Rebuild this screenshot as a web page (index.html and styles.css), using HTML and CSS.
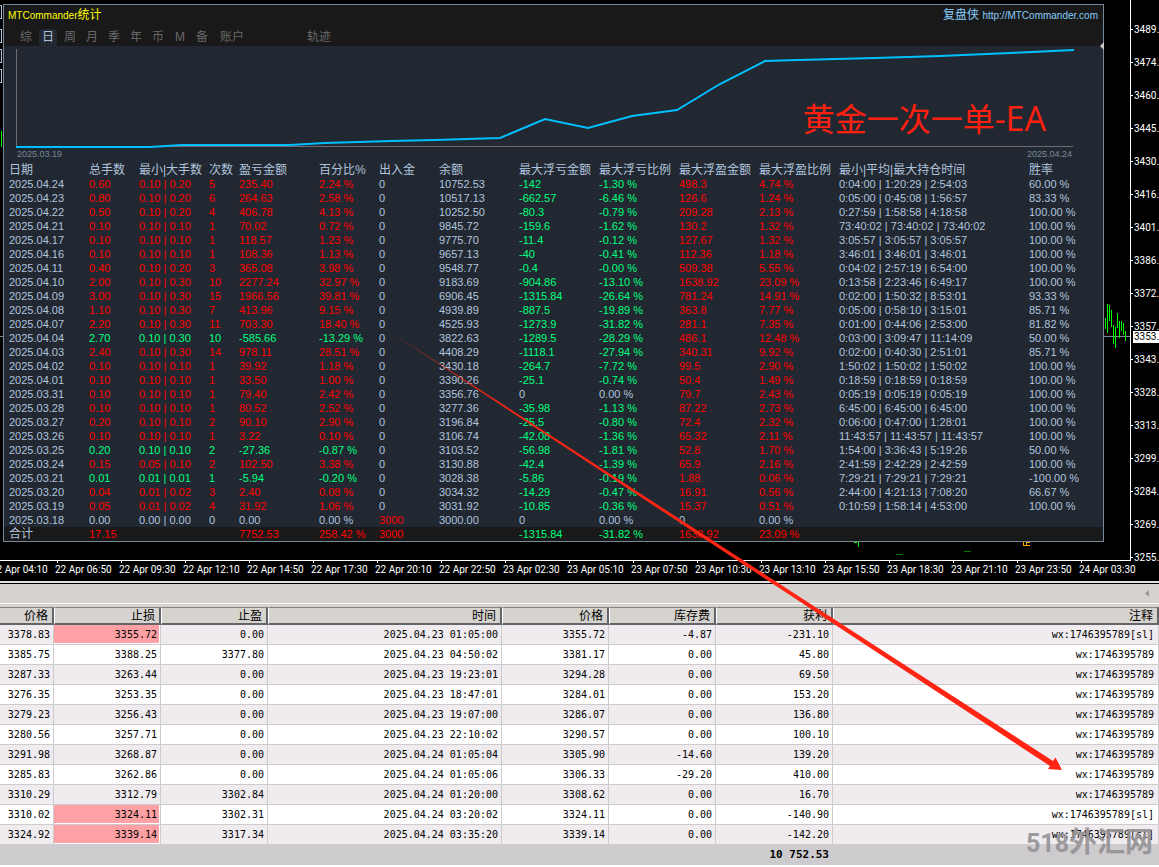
FILE: index.html
```html
<!DOCTYPE html>
<html lang="zh-CN">
<head>
    <meta charset="utf-8">
    <title>MTCommander统计</title>
    <link rel="stylesheet" href="styles.css">
</head>
<body>

<section class="chart-window">
    <div class="plot">
        <!-- what is left of the chart on the left side of the panel -->
        <svg class="edge" width="3" height="560">
            <g fill="none" stroke="#b0c4de">
                <rect x="-4.5" y="5.5" width="6" height="13"/>
                <rect x="-4.5" y="29.5" width="6" height="13"/>
                <rect x="-4.5" y="49.5" width="6" height="13"/>
                <rect x="-4.5" y="69.5" width="6" height="13"/>
            </g>
            <path d="M1.5 131v16" stroke="#0f0"/>
            <path d="M0 336.5h3" stroke="#778899"/>
        </svg>

        <div class="panel-area">
            <div class="panel">
                <header class="panel-head">
                    <div class="title-row">
                        <h1><span class="latin">MTCommander</span>统计</h1>
                        <a href="#">复盘侠 <span class="latin">http://MTCommander.com</span></a>
                    </div>
                    <nav class="tabs">
                        <button type="button">综</button>
                        <button type="button" class="active">日</button>
                        <button type="button">周</button>
                        <button type="button">月</button>
                        <button type="button">季</button>
                        <button type="button">年</button>
                        <button type="button">币</button>
                        <button type="button">M</button>
                        <button type="button">备</button>
                        <button type="button" class="wide">账户</button>
                        <button type="button" class="wide track">轨迹</button>
                    </nav>
                </header>

                <svg class="curve" viewBox="4 46 1099 103" preserveAspectRatio="none">
                    <path d="M16.5 49V146.5H1073" fill="none" stroke="#6f6a70"/>
                    <polyline fill="none" stroke="#00bfff" stroke-width="2"
                              points="16,147 150,147 182,145 290,145 325,143 358,142 391,141 435,140 500,138 545,119 588,128 632,116 677,110 720,84 765,61 798,60 875,58 940,56 1010,53 1074,50"/>
                </svg>
                <div class="range"><span>2025.03.19</span><span>2025.04.24</span></div>

                <table class="stats">
                    <colgroup>
                        <col class="w80"><col class="w50"><col class="w70"><col class="w30"><col class="w80">
                        <col class="w60"><col class="w60"><col class="w80"><col class="w80"><col class="w80">
                        <col class="w80"><col class="w80"><col class="w190"><col>
                    </colgroup>
                    <thead>
                    <tr><th>日期<th>总手数<th>最小|大手数<th>次数<th>盈亏金额<th>百分比%<th>出入金<th>余额<th>最大浮亏金额<th>最大浮亏比例<th>最大浮盈金额<th>最大浮盈比例<th>最小|平均|最大持仓时间<th>胜率</tr>
                    </thead>
                    <tbody>
                    <tr class="win"><td>2025.04.24<td>0.60<td>0.10 | 0.20<td>5<td>235.40<td>2.24 %<td>0<td>10752.53<td>-142<td>-1.30 %<td>498.3<td>4.74 %<td>0:04:00 | 1:20:29 | 2:54:03<td>60.00 %</tr>
                    <tr class="win"><td>2025.04.23<td>0.80<td>0.10 | 0.20<td>6<td>264.63<td>2.58 %<td>0<td>10517.13<td>-662.57<td>-6.46 %<td>126.6<td>1.24 %<td>0:05:00 | 0:45:08 | 1:56:57<td>83.33 %</tr>
                    <tr class="win"><td>2025.04.22<td>0.50<td>0.10 | 0.20<td>4<td>406.78<td>4.13 %<td>0<td>10252.50<td>-80.3<td>-0.79 %<td>209.28<td>2.13 %<td>0:27:59 | 1:58:58 | 4:18:58<td>100.00 %</tr>
                    <tr class="win"><td>2025.04.21<td>0.10<td>0.10 | 0.10<td>1<td>70.02<td>0.72 %<td>0<td>9845.72<td>-159.6<td>-1.62 %<td>130.2<td>1.32 %<td>73:40:02 | 73:40:02 | 73:40:02<td>100.00 %</tr>
                    <tr class="win"><td>2025.04.17<td>0.10<td>0.10 | 0.10<td>1<td>118.57<td>1.23 %<td>0<td>9775.70<td>-11.4<td>-0.12 %<td>127.67<td>1.32 %<td>3:05:57 | 3:05:57 | 3:05:57<td>100.00 %</tr>
                    <tr class="win"><td>2025.04.16<td>0.10<td>0.10 | 0.10<td>1<td>108.36<td>1.13 %<td>0<td>9657.13<td>-40<td>-0.41 %<td>112.36<td>1.18 %<td>3:46:01 | 3:46:01 | 3:46:01<td>100.00 %</tr>
                    <tr class="win"><td>2025.04.11<td>0.40<td>0.10 | 0.20<td>3<td>365.08<td>3.98 %<td>0<td>9548.77<td>-0.4<td>-0.00 %<td>509.38<td>5.55 %<td>0:04:02 | 2:57:19 | 6:54:00<td>100.00 %</tr>
                    <tr class="win"><td>2025.04.10<td>2.00<td>0.10 | 0.30<td>10<td>2277.24<td>32.97 %<td>0<td>9183.69<td>-904.86<td>-13.10 %<td>1638.92<td>23.09 %<td>0:13:58 | 2:23:46 | 6:49:17<td>100.00 %</tr>
                    <tr class="win"><td>2025.04.09<td>3.00<td>0.10 | 0.30<td>15<td>1966.56<td>39.81 %<td>0<td>6906.45<td>-1315.84<td>-26.64 %<td>781.24<td>14.91 %<td>0:02:00 | 1:50:32 | 8:53:01<td>93.33 %</tr>
                    <tr class="win"><td>2025.04.08<td>1.10<td>0.10 | 0.30<td>7<td>413.96<td>9.15 %<td>0<td>4939.89<td>-887.5<td>-19.89 %<td>363.8<td>7.77 %<td>0:05:00 | 0:58:10 | 3:15:01<td>85.71 %</tr>
                    <tr class="win"><td>2025.04.07<td>2.20<td>0.10 | 0.30<td>11<td>703.30<td>18.40 %<td>0<td>4525.93<td>-1273.9<td>-31.82 %<td>281.1<td>7.35 %<td>0:01:00 | 0:44:06 | 2:53:00<td>81.82 %</tr>
                    <tr class="loss"><td>2025.04.04<td>2.70<td>0.10 | 0.30<td>10<td>-585.66<td>-13.29 %<td>0<td>3822.63<td>-1289.5<td>-28.29 %<td>486.1<td>12.48 %<td>0:03:00 | 3:09:47 | 11:14:09<td>50.00 %</tr>
                    <tr class="win"><td>2025.04.03<td>2.40<td>0.10 | 0.30<td>14<td>978.11<td>28.51 %<td>0<td>4408.29<td>-1118.1<td>-27.94 %<td>340.31<td>9.92 %<td>0:02:00 | 0:40:30 | 2:51:01<td>85.71 %</tr>
                    <tr class="win"><td>2025.04.02<td>0.10<td>0.10 | 0.10<td>1<td>39.92<td>1.18 %<td>0<td>3430.18<td>-264.7<td>-7.72 %<td>99.5<td>2.90 %<td>1:50:02 | 1:50:02 | 1:50:02<td>100.00 %</tr>
                    <tr class="win"><td>2025.04.01<td>0.10<td>0.10 | 0.10<td>1<td>33.50<td>1.00 %<td>0<td>3390.26<td>-25.1<td>-0.74 %<td>50.4<td>1.49 %<td>0:18:59 | 0:18:59 | 0:18:59<td>100.00 %</tr>
                    <tr class="win"><td>2025.03.31<td>0.10<td>0.10 | 0.10<td>1<td>79.40<td>2.42 %<td>0<td>3356.76<td class="zero">0<td class="zero">0.00 %<td>79.7<td>2.43 %<td>0:05:19 | 0:05:19 | 0:05:19<td>100.00 %</tr>
                    <tr class="win"><td>2025.03.28<td>0.10<td>0.10 | 0.10<td>1<td>80.52<td>2.52 %<td>0<td>3277.36<td>-35.98<td>-1.13 %<td>87.22<td>2.73 %<td>6:45:00 | 6:45:00 | 6:45:00<td>100.00 %</tr>
                    <tr class="win"><td>2025.03.27<td>0.20<td>0.10 | 0.10<td>2<td>90.10<td>2.90 %<td>0<td>3196.84<td>-25.5<td>-0.80 %<td>72.4<td>2.32 %<td>0:06:00 | 0:47:00 | 1:28:01<td>100.00 %</tr>
                    <tr class="win"><td>2025.03.26<td>0.10<td>0.10 | 0.10<td>1<td>3.22<td>0.10 %<td>0<td>3106.74<td>-42.08<td>-1.36 %<td>65.32<td>2.11 %<td>11:43:57 | 11:43:57 | 11:43:57<td>100.00 %</tr>
                    <tr class="loss"><td>2025.03.25<td>0.20<td>0.10 | 0.10<td>2<td>-27.36<td>-0.87 %<td>0<td>3103.52<td>-56.98<td>-1.81 %<td>52.8<td>1.70 %<td>1:54:00 | 3:36:43 | 5:19:26<td>50.00 %</tr>
                    <tr class="win"><td>2025.03.24<td>0.15<td>0.05 | 0.10<td>2<td>102.50<td>3.38 %<td>0<td>3130.88<td>-42.4<td>-1.39 %<td>65.9<td>2.16 %<td>2:41:59 | 2:42:29 | 2:42:59<td>100.00 %</tr>
                    <tr class="loss"><td>2025.03.21<td>0.01<td>0.01 | 0.01<td>1<td>-5.94<td>-0.20 %<td>0<td>3028.38<td>-5.86<td>-0.19 %<td>1.88<td>0.06 %<td>7:29:21 | 7:29:21 | 7:29:21<td>-100.00 %</tr>
                    <tr class="win"><td>2025.03.20<td>0.04<td>0.01 | 0.02<td>3<td>2.40<td>0.08 %<td>0<td>3034.32<td>-14.29<td>-0.47 %<td>16.91<td>0.56 %<td>2:44:00 | 4:21:13 | 7:08:20<td>66.67 %</tr>
                    <tr class="win"><td>2025.03.19<td>0.05<td>0.01 | 0.02<td>4<td>31.92<td>1.06 %<td>0<td>3031.92<td>-10.85<td>-0.36 %<td>15.37<td>0.51 %<td>0:10:59 | 1:58:14 | 4:53:00<td>100.00 %</tr>
                    <tr class="deposit"><td>2025.03.18<td>0.00<td>0.00 | 0.00<td>0<td>0.00<td>0.00 %<td>3000<td>3000.00<td>0<td>0.00 %<td>0<td>0.00 %<td><td></tr>
                    </tbody>
                    <tfoot>
                    <tr class="win deposit"><td class="sum">合计<td>17.15<td><td><td>7752.53<td>258.42 %<td>3000<td><td>-1315.84<td>-31.82 %<td>1638.92<td>23.09 %<td><td></tr>
                    </tfoot>
                </table>
                <p class="slogan">黄金一次一单<span class="ea">-EA</span></p>
                <svg class="grip" width="4" height="8"><path d="M4 0v8L0 4z" fill="#c8c8c8"/></svg>
            </div>
            <svg class="under" width="1101" height="18">
                <path d="M851 .5h3M855.5 0v5" stroke="#0f0"/>
                <path d="M893 12.5h7M961 9.5h7" stroke="#008000"/>
                <path d="M1020 3.5h7M1020.5 0v4M1023.5 0v4M1023 .5h4" fill="none" stroke="#ffa500"/>
            </svg>
        </div>

        <svg class="candles" width="26" height="560">
            <path d="M0 336.5h26" stroke="#778899"/>
            <path stroke="#0f0" d="M1.5 318v11M3.5 304v29M5.5 305v16M7.5 310v17M9.5 325v19M11.5 327v21M13.5 313v15M15.5 321v17M17.5 321v10M19.5 323v12M21.5 331v10"/>
        </svg>
    </div>

    <div class="price-axis">
        <span>3489.</span><span>3474.</span><span>3460.</span><span>3445.</span><span>3430.</span><span>3416.</span>
        <span>3401.</span><span>3386.</span><span>3372.</span><span>3357.</span><span>3343.</span><span>3328.</span>
        <span>3313.</span><span>3299.</span><span>3284.</span><span>3269.</span><span>3255.</span>
        <b class="price-now">3353.</b>
    </div>
</section>

<div class="time-axis">
    <span>22 Apr 04:10</span><span>22 Apr 06:50</span><span>22 Apr 09:30</span><span>22 Apr 12:10</span>
    <span>22 Apr 14:50</span><span>22 Apr 17:30</span><span>22 Apr 20:10</span><span>22 Apr 22:50</span>
    <span>23 Apr 02:30</span><span>23 Apr 05:10</span><span>23 Apr 07:50</span><span>23 Apr 10:30</span>
    <span>23 Apr 13:10</span><span>23 Apr 15:50</span><span>23 Apr 18:30</span><span>23 Apr 21:10</span>
    <span>23 Apr 23:50</span><span>24 Apr 03:30</span>
</div>

<div class="splitter">
    <svg width="4" height="7"><path d="M4 0v7L0 3.5z" fill="#999"/></svg>
</div>

<section class="terminal">
    <table class="orders">
        <colgroup>
            <col class="w54"><col class="w107"><col class="w107"><col class="w234">
            <col class="w107"><col class="w107"><col class="w117"><col>
        </colgroup>
        <thead>
        <tr><th>价格<th>止损<th>止盈<th>时间<th>价格<th>库存费<th>获利<th>注释</tr>
        </thead>
        <tbody>
        <tr><td>3378.83<td class="hit">3355.72<td>0.00<td>2025.04.23 01:05:00<td>3355.72<td>-4.87<td>-231.10<td>wx:1746395789[sl]</tr>
        <tr><td>3385.75<td>3388.25<td>3377.80<td>2025.04.23 04:50:02<td>3381.17<td>0.00<td>45.80<td>wx:1746395789</tr>
        <tr><td>3287.33<td>3263.44<td>0.00<td>2025.04.23 19:23:01<td>3294.28<td>0.00<td>69.50<td>wx:1746395789</tr>
        <tr><td>3276.35<td>3253.35<td>0.00<td>2025.04.23 18:47:01<td>3284.01<td>0.00<td>153.20<td>wx:1746395789</tr>
        <tr><td>3279.23<td>3256.43<td>0.00<td>2025.04.23 19:07:00<td>3286.07<td>0.00<td>136.80<td>wx:1746395789</tr>
        <tr><td>3280.56<td>3257.71<td>0.00<td>2025.04.23 22:10:02<td>3290.57<td>0.00<td>100.10<td>wx:1746395789</tr>
        <tr><td>3291.98<td>3268.87<td>0.00<td>2025.04.24 01:05:04<td>3305.90<td>-14.60<td>139.20<td>wx:1746395789</tr>
        <tr><td>3285.83<td>3262.86<td>0.00<td>2025.04.24 01:05:06<td>3306.33<td>-29.20<td>410.00<td>wx:1746395789</tr>
        <tr><td>3310.29<td>3312.79<td>3302.84<td>2025.04.24 01:20:00<td>3308.62<td>0.00<td>16.70<td>wx:1746395789</tr>
        <tr><td>3310.02<td class="hit">3324.11<td>3302.31<td>2025.04.24 03:20:02<td>3324.11<td>0.00<td>-140.90<td>wx:1746395789[sl]</tr>
        <tr><td>3324.92<td class="hit">3339.14<td>3317.34<td>2025.04.24 03:35:20<td>3339.14<td>0.00<td>-142.20<td>wx:1746395789[sl]</tr>
        </tbody>
        <tfoot>
        <tr><td colspan="7">10 752.53<td></tr>
        </tfoot>
    </table>
    <p class="watermark"><span class="num">518</span>外汇网</p>
</section>

<!-- arrow from the balance column down to the order comments -->
<svg class="arrow" width="1159" height="867">
    <defs>
        <linearGradient id="fade" gradientUnits="userSpaceOnUse" x1="395" y1="335" x2="500" y2="404">
            <stop offset="0" stop-color="#ff2414" stop-opacity=".1"/>
            <stop offset="1" stop-color="#ff2414"/>
        </linearGradient>
    </defs>
    <path fill="url(#fade)" d="M395 334.5L1053 761L1055.5 757.5L1062 770L1048 769L1050 766L395 335.5Z"/>
</svg>

</body>
</html>
```
FILE: styles.css
```css
body {
    margin: 0;
    position: relative;
    background: #fff;
    color: #000;
    font-family: "Liberation Sans", "Noto Sans CJK SC", sans-serif;
    font-size: 11px;
    line-height: 14px;
}

h1, p {
    margin: 0;
}

svg {
    display: block;
}

table {
    width: 100%;
    table-layout: fixed;
    border-collapse: separate;
    border-spacing: 0;
}

th, td {
    padding: 0;
    white-space: nowrap;
    font-weight: normal;
}

/* column widths */
.w30 { width: 30px; }
.w50 { width: 50px; }
.w54 { width: 54px; }
.w60 { width: 60px; }
.w70 { width: 70px; }
.w80 { width: 80px; }
.w107 { width: 107px; }
.w117 { width: 117px; }
.w190 { width: 190px; }
.w234 { width: 234px; }

/* ---- chart window ---- */
.chart-window {
    display: flex;
    background: #000;
}

.plot {
    flex: 1;
    min-width: 0;
    display: grid;
    grid-template-columns: 3px 1fr 26px;
    border-right: 1px solid #fff;
    border-bottom: 1px solid #fff;
}

.panel-area {
    min-width: 0;
    padding-top: 4px;
    overflow: hidden;
}

.panel {
    position: relative;
    border: 1px solid #778899;
    background: #222831;
    color: #b0c4de;
}

.panel-head {
    background: #191919;
}

.title-row {
    display: flex;
    justify-content: space-between;
    padding: 0 5px 4px 4px;
    font-size: 12px;
    line-height: 20px;
}

.title-row h1 {
    font-size: 12px;
    font-weight: normal;
    color: #ff0;
}

.title-row a {
    color: #87cefa;
    text-decoration: none;
}

.latin {
    font-size: 10px;
    line-height: 1;
}

.tabs {
    display: flex;
    gap: 4px;
    padding-left: 13px;
}

.tabs button {
    width: 18px;
    height: 17px;
    padding: 0;
    border: 0;
    border-radius: 2px;
    background: none;
    color: #696969;
    font: 12px/17px "Liberation Sans", "Noto Sans CJK SC", sans-serif;
}

.tabs .wide {
    width: 34px;
}

.tabs .track {
    margin-left: 49px;
}

.tabs .active {
    background: #222831;
    color: #b0c4de;
}

.curve {
    width: 100%;
    height: 103px;
}

.range {
    display: flex;
    justify-content: space-between;
    padding: 0 31px 4px 13px;
    color: #778899;
    font-size: 9px;
    line-height: 10px;
}

/* ---- daily statistics ---- */
.stats td, .stats th {
    height: 14px;
    text-align: left;
}

.stats td:first-child, .stats th:first-child {
    padding-left: 5px;
}

.stats col:first-child {
    width: 85px;
}

.stats th, .stats .sum {
    font-size: 12px;
}

.stats tfoot {
    background: #191919;
}

.win td:nth-child(n+2):nth-child(-n+6),
.win td:nth-child(11), .win td:nth-child(12),
.loss td:nth-child(11), .loss td:nth-child(12),
.deposit td:nth-child(7) {
    color: #f00;
}

.loss td:nth-child(n+2):nth-child(-n+6),
.win td:nth-child(9), .win td:nth-child(10),
.loss td:nth-child(9), .loss td:nth-child(10) {
    color: #00ff7f;
}

.win td.zero:nth-child(n) {
    color: #b0c4de;
}

.slogan {
    position: absolute;
    top: 88px;
    right: 57px;
    color: #ff2010;
    font: 32px/48px "Noto Sans CJK SC", sans-serif;
}

.slogan .ea {
    font-family: "Open Sans", sans-serif;
    font-size: 34px;
    line-height: 1;
}

.grip {
    position: absolute;
    top: 37px;
    right: -1px;
}

/* ---- axes ---- */
.price-axis, .time-axis {
    color: #fff;
    font-family: Roboto, sans-serif;
    font-size: 10px;
}

.price-axis {
    position: relative;
    width: 28px;
    padding-top: 13px;
    margin-bottom: -13px;
    overflow: hidden;
}

.price-axis span {
    display: flex;
    align-items: center;
    gap: 1px;
    height: 33px;
}

.price-axis span::before {
    content: "";
    flex: none;
    width: 2px;
    height: 1px;
    background: #fff;
}

.price-now {
    position: absolute;
    top: 331px;
    left: 2px;
    width: 26px;
    padding-left: 1px;
    background: #fff;
    color: #000;
    font-weight: normal;
    line-height: 12px;
}

.time-axis {
    display: flex;
    height: 20px;
    overflow: hidden;
    background: #000;
    border-bottom: 2px solid #e4e2de;
}

.time-axis span {
    flex: none;
    width: 64px;
    line-height: 14px;
    white-space: nowrap;
}

.time-axis span:first-child {
    margin-left: -9px;
}

.time-axis span::before {
    content: "";
    display: block;
    width: 1px;
    height: 2px;
    margin-left: 2px;
    background: #fff;
}

/* ---- terminal ---- */
.splitter {
    display: flex;
    align-items: center;
    justify-content: flex-end;
    height: 19px;
    padding-right: 10px;
    border-top: 1px solid #000;
    border-bottom: 1px solid #fff;
    background: #d6d3ce;
}

.terminal {
    position: relative;
    padding-top: 3px;
    background: #d6d3ce;
}

.orders {
    font-family: "DejaVu Sans Mono", "Noto Sans CJK SC", monospace;
    font-size: 10px;
}

.orders th {
    box-sizing: border-box;
    height: 18px;
    padding-top: 1px;
    padding-right: 4px;
    border: 1px solid #fff;
    border-top-color: #848284;
    border-right: 2px solid #63656b;
    border-bottom: 2px solid #63656b;
    font-size: 12px;
    line-height: 14px;
    text-align: right;
}

.orders td {
    box-sizing: border-box;
    height: 20px;
    padding-right: 3px;
    border-right: 1px solid #cecbce;
    border-bottom: 1px solid #cecbce;
    line-height: 19px;
    text-align: right;
}

.orders th:first-child {
    border-left: 0;
}

.orders tbody tr {
    background: #fff;
}

.orders tbody tr:nth-child(odd) {
    background: #efebef;
}

.orders td:last-child {
    padding-right: 4px;
}

.orders tbody .hit {
    background: #ffa0a4;
    box-shadow: inset -1px -1px #fff;
}

.orders tfoot td {
    background: #cecbce;
    font-size: 11px;
    font-weight: bold;
}

.watermark {
    position: absolute;
    right: 6px;
    bottom: 6px;
    color: #949294;
    font: bold 28px/30px "Noto Sans CJK SC", sans-serif;
    opacity: .9;
}

.watermark .num {
    font-family: Roboto, sans-serif;
    font-size: 25px;
}

.arrow {
    position: absolute;
    top: 0;
    left: 0;
    pointer-events: none;
}
```
